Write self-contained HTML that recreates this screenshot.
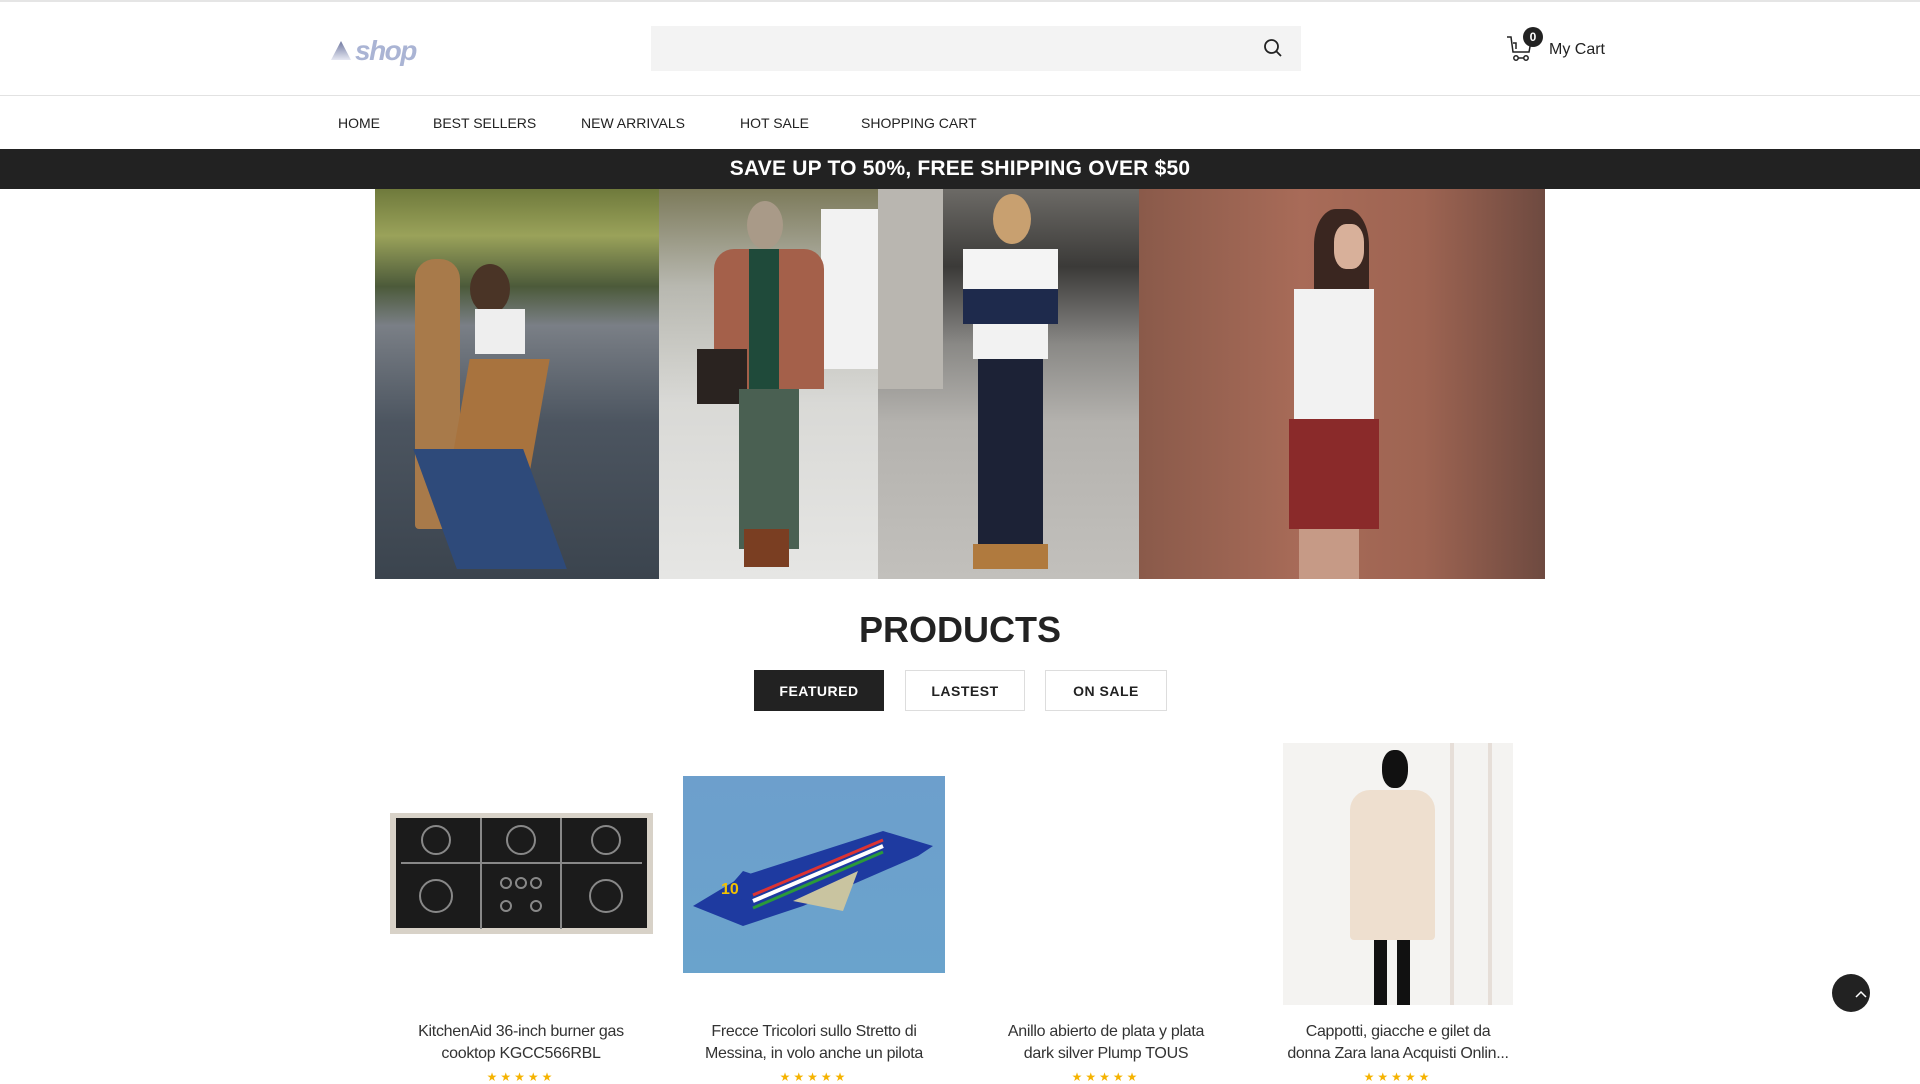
<!DOCTYPE html>
<html><head><meta charset="utf-8"><style>
*{margin:0;padding:0;box-sizing:border-box}
body{width:1920px;height:1080px;overflow:hidden;background:#fff;font-family:"Liberation Sans",sans-serif;color:#222;position:relative}
.abs{position:absolute}
.nav a{position:absolute;top:115px;font-size:14px;color:#222;text-decoration:none;letter-spacing:0}
.tab{position:absolute;top:670px;height:41px;border:1px solid #ddd;font-size:14px;font-weight:bold;display:flex;align-items:center;justify-content:center;letter-spacing:.5px}
.title{position:absolute;top:1021px;width:230px;text-align:center;font-size:16px;line-height:22px;color:#333;letter-spacing:-.3px}
.stars{position:absolute;top:1070px;width:230px;text-align:center;color:#f5b301;font-size:12px;letter-spacing:3px}
</style></head><body>
<div class="abs" style="left:0;top:0;width:1920px;height:2px;background:#e5e5e5"></div>
<svg class="abs" style="left:329px;top:34px" width="92" height="32" viewBox="0 0 92 32">
<defs><linearGradient id="tg" x1="0" y1="0" x2="0" y2="1"><stop offset="0" stop-color="#6f78a0"/><stop offset="1" stop-color="#e6e8f2"/></linearGradient></defs>
<polygon points="12,7 2,26 22,26" fill="url(#tg)"/>
<text x="26" y="26" font-family="Liberation Sans,sans-serif" font-style="italic" font-weight="bold" font-size="28" fill="#aab4d4" letter-spacing="-1.5">shop</text>
</svg>
<div class="abs" style="left:651px;top:26px;width:650px;height:45px;background:#f3f3f3"></div>
<svg class="abs" style="left:1263px;top:38px" width="20" height="20" viewBox="0 0 20 20"><circle cx="8.5" cy="8.5" r="6.5" fill="none" stroke="#222" stroke-width="1.8"/><line x1="13.3" y1="13.3" x2="18" y2="18" stroke="#222" stroke-width="1.8"/></svg>
<svg class="abs" style="left:1506px;top:34px" width="30" height="30" viewBox="0 0 30 30" fill="none" stroke="#222" stroke-width="1.5"><path d="M1 3h4l2 15h16l1.5-8"/><path d="M7 9h3v6"/><circle cx="10" cy="24" r="2.2"/><circle cx="20" cy="24" r="2.2"/><line x1="12.2" y1="24" x2="17.8" y2="24"/></svg>
<div class="abs" style="left:1523px;top:27px;width:20px;height:20px;border-radius:50%;background:#222;color:#fff;font-size:12px;font-weight:bold;text-align:center;line-height:20px">0</div>
<div class="abs" style="left:1549px;top:41px;font-size:16px;color:#222">My Cart</div>
<div class="abs" style="left:0;top:95px;width:1920px;height:1px;background:#e2e2e2"></div>
<div class="nav">
<a style="left:338px">HOME</a><a style="left:433px">BEST SELLERS</a><a style="left:581px">NEW ARRIVALS</a><a style="left:740px">HOT SALE</a><a style="left:861px">SHOPPING CART</a>
</div>
<div class="abs" style="left:0;top:149px;width:1920px;height:40px;background:#222;color:#fff;font-size:21px;font-weight:bold;text-align:center;line-height:40px;letter-spacing:.2px">SAVE UP TO 50%, FREE SHIPPING OVER $50</div>
<div class="abs" style="left:375px;top:189px;width:284px;height:390px;background:linear-gradient(180deg,#6f7a3c 0%,#9aa25a 12%,#4c5a3a 25%,#7a7f86 35%,#4c5560 60%,#3b444e 100%);overflow:hidden">
 <div class="abs" style="left:40px;top:70px;width:45px;height:270px;background:#a87a4a;border-radius:20px 20px 4px 4px"></div>
 <div class="abs" style="left:95px;top:75px;width:40px;height:50px;background:#4a3426;border-radius:50%"></div>
 <div class="abs" style="left:100px;top:120px;width:50px;height:45px;background:#eee"></div>
 <div class="abs" style="left:85px;top:170px;width:80px;height:110px;background:#a8733e;transform:skewX(-10deg)"></div>
 <div class="abs" style="left:60px;top:260px;width:110px;height:120px;background:#2e4a7a;transform:skewX(20deg)"></div>
</div>
<div class="abs" style="left:659px;top:189px;width:219px;height:390px;background:linear-gradient(180deg,#7c7a5a 0%,#b8b8b0 25%,#d9d9d6 55%,#e6e6e4 100%);overflow:hidden">
 <div class="abs" style="left:162px;top:20px;width:57px;height:160px;background:#f2f2f2"></div>
 <div class="abs" style="left:88px;top:12px;width:36px;height:48px;background:#a99a88;border-radius:50%"></div>
 <div class="abs" style="left:55px;top:60px;width:110px;height:140px;background:#a4604a;border-radius:20px 20px 0 0"></div>
 <div class="abs" style="left:90px;top:60px;width:30px;height:140px;background:#1f4a3a"></div>
 <div class="abs" style="left:38px;top:160px;width:50px;height:55px;background:#2a2320"></div>
 <div class="abs" style="left:80px;top:200px;width:60px;height:160px;background:#4a6052"></div>
 <div class="abs" style="left:85px;top:340px;width:45px;height:38px;background:#7a3e22"></div>
</div>
<div class="abs" style="left:878px;top:189px;width:261px;height:390px;background:linear-gradient(180deg,#6c6a66 0%,#3b3a38 20%,#8a8986 40%,#b4b2ae 60%,#c2c0bc 100%);overflow:hidden">
 <div class="abs" style="left:0;top:0;width:65px;height:200px;background:#b9b6b0"></div>
 <div class="abs" style="left:115px;top:5px;width:38px;height:50px;background:#c8a070;border-radius:50%"></div>
 <div class="abs" style="left:85px;top:60px;width:95px;height:40px;background:#f4f4f4"></div>
 <div class="abs" style="left:85px;top:100px;width:95px;height:35px;background:#1e2a4c"></div>
 <div class="abs" style="left:95px;top:135px;width:75px;height:35px;background:#f2f2f2"></div>
 <div class="abs" style="left:100px;top:170px;width:65px;height:185px;background:#1c2236"></div>
 <div class="abs" style="left:95px;top:355px;width:75px;height:25px;background:#b07a3e"></div>
</div>
<div class="abs" style="left:1139px;top:189px;width:406px;height:390px;background:linear-gradient(90deg,#8a5a4a 0%,#a86b58 40%,#9e6452 70%,#6e4a40 100%);overflow:hidden">
 <div class="abs" style="left:175px;top:20px;width:55px;height:90px;background:#3a2620;border-radius:40% 40% 10% 10%"></div>
 <div class="abs" style="left:195px;top:35px;width:30px;height:45px;background:#d8b09a;border-radius:40%"></div>
 <div class="abs" style="left:155px;top:100px;width:80px;height:140px;background:#f2f2f2"></div>
 <div class="abs" style="left:150px;top:230px;width:90px;height:110px;background:#8a2a2a"></div>
 <div class="abs" style="left:160px;top:340px;width:60px;height:50px;background:#c69a86"></div>
</div>
<div class="abs" style="left:0;top:609px;width:1920px;text-align:center;font-size:36px;font-weight:bold;color:#222;letter-spacing:0">PRODUCTS</div>
<div class="tab" style="left:754px;width:130px;background:#222;color:#fff;border-color:#222">FEATURED</div>
<div class="tab" style="left:905px;width:120px">LASTEST</div>
<div class="tab" style="left:1045px;width:122px">ON SALE</div>
<div class="abs" style="left:390px;top:813px;width:263px;height:121px;background:#1b1b1b;border:6px solid #d8d2c8;border-top-width:5px"></div>
<svg class="abs" style="left:396px;top:818px" width="251" height="111" viewBox="0 0 251 111" fill="none" stroke="#888" stroke-width="2"><circle cx="40" cy="22" r="14"/><circle cx="125" cy="22" r="14"/><circle cx="210" cy="22" r="14"/><circle cx="40" cy="78" r="16"/><circle cx="210" cy="78" r="16"/><circle cx="110" cy="65" r="5"/><circle cx="125" cy="65" r="5"/><circle cx="140" cy="65" r="5"/><circle cx="110" cy="88" r="5"/><circle cx="140" cy="88" r="5"/><path d="M5 45h241M85 0v111M165 0v111"/></svg>
<div class="abs" style="left:683px;top:776px;width:262px;height:197px;background:linear-gradient(180deg,#6d9fcc,#6aa3cc)"></div>
<svg class="abs" style="left:683px;top:776px" width="262" height="197" viewBox="0 0 262 197"><polygon points="10,130 60,100 200,55 250,70 235,80 120,130 60,150" fill="#1e3aa0"/><polygon points="60,95 90,105 80,130 40,118" fill="#1e3aa0"/><path d="M70,125 L200,70" stroke="#fff" stroke-width="4"/><path d="M70,132 L200,76" stroke="#2a9a3a" stroke-width="3"/><path d="M70,119 L200,64" stroke="#d33" stroke-width="3"/><polygon points="110,125 175,95 160,135" fill="#c9c4a0"/><text x="38" y="118" font-size="16" font-weight="bold" fill="#f3c200" font-family="Liberation Sans">10</text></svg>
<div class="abs" style="left:1283px;top:743px;width:230px;height:262px;background:#f4f3f1"></div>
<div class="abs" style="left:1450px;top:743px;width:42px;height:262px;border-left:4px solid #e6ded8;border-right:4px solid #e6ded8"></div>
<div class="abs" style="left:1382px;top:750px;width:26px;height:38px;background:#111;border-radius:45%"></div>
<div class="abs" style="left:1350px;top:790px;width:85px;height:150px;background:#eedfcf;border-radius:20px 20px 4px 4px"></div>
<div class="abs" style="left:1374px;top:940px;width:13px;height:65px;background:#111"></div>
<div class="abs" style="left:1397px;top:940px;width:13px;height:65px;background:#111"></div>
<div class="title" style="left:406px">KitchenAid 36-inch burner gas cooktop KGCC566RBL</div>
<div class="title" style="left:699px">Frecce Tricolori sullo Stretto di Messina, in volo anche un pilota</div>
<div class="title" style="left:991px">Anillo abierto de plata y plata dark silver Plump TOUS</div>
<div class="title" style="left:1283px">Cappotti, giacche e gilet da<br>donna Zara lana Acquisti Onlin...</div>
<div class="stars" style="left:406px">★★★★★</div>
<div class="stars" style="left:699px">★★★★★</div>
<div class="stars" style="left:991px">★★★★★</div>
<div class="stars" style="left:1283px">★★★★★</div>
<div class="abs" style="left:1832px;top:974px;width:38px;height:38px;border-radius:50%;background:#222"></div>
<svg class="abs" style="left:1855px;top:990px" width="12" height="8" viewBox="0 0 12 8"><path d="M1 7l5-5 5 5" fill="none" stroke="#fff" stroke-width="1.5"/></svg>
</body></html>
